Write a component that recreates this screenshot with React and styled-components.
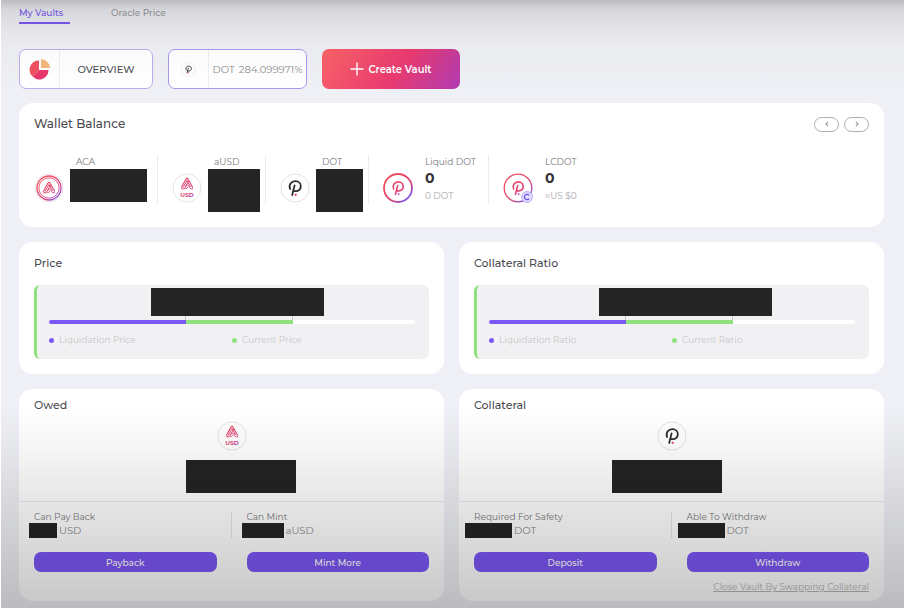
import React from "react";
import styled, { createGlobalStyle } from "styled-components";

const assets = [
  { name: "ACA", icon: "aca", hidden: { width: 77, height: 33 } },
  { name: "aUSD", icon: "ausd", hidden: { width: 52, height: 43 } },
  { name: "DOT", icon: "dot", hidden: { width: 47, height: 43 } },
  { name: "Liquid DOT", icon: "ldot", amount: "0", note: "0 DOT" },
  { name: "LCDOT", icon: "lcdot", amount: "0", note: "≈US $0" }
];

const gauges = [
  { title: "Price", labelStart: 28, liquidation: 37.5, current: 66.7 },
  { title: "Collateral Ratio", labelStart: 30, liquidation: 37.5, current: 66.7 }
];

const positions = [
  {
    title: "Owed",
    icon: "ausd",
    amountStart: 38.5,
    bleed: 5,
    actions: [
      { label: "Can Pay Back", hidden: 28, unit: "USD", button: "Payback" },
      { label: "Can Mint", hidden: 42, unit: "aUSD", button: "Mint More" }
    ]
  },
  {
    title: "Collateral",
    icon: "dot",
    amountStart: 35,
    bleed: 9,
    actions: [
      { label: "Required For Safety", hidden: 47, unit: "DOT", button: "Deposit" },
      { label: "Able To Withdraw", hidden: 47, unit: "DOT", button: "Withdraw" }
    ],
    link: "Close Vault By Swapping Collateral"
  }
];

function BrandGradient({ id }) {
  return (
    <defs>
      <linearGradient
        id={id}
        gradientUnits="userSpaceOnUse"
        x1="-8"
        y1="-8"
        x2="10"
        y2="12"
      >
        <stop offset="0" stopColor="#ee4c5e" />
        <stop offset="0.6" stopColor="#dc4278" />
        <stop offset="1" stopColor="#7458f5" />
      </linearGradient>
    </defs>
  );
}

function AcalaMark({ stroke }) {
  return (
    <g fill="none" stroke={stroke} strokeLinejoin="round" strokeLinecap="round">
      <path strokeWidth="1.1" d="M-5.6 3.2 L-0.7 -5.6 H0.7 L5.6 3.2" />
      <path strokeWidth="1" d="M-5.4 4.8 H-2.8 L1.5 -2.8" />
      <path strokeWidth="1" d="M-3.8 3.2 L0 -3.6 L3.4 2.6" />
      <path
        strokeWidth="1"
        d="M-1.4 2.6 C-0.4 0.2 2.2 0.8 2.2 2.6 C2.2 4.4 4 5 5.6 4.8"
      />
      <path strokeWidth="1" d="M-1.4 4.4 C-0.4 4.8 0.6 4.2 0.8 3.2" />
    </g>
  );
}

function PolkadotMark({ stroke, dot }) {
  return (
    <g>
      <path
        fill="none"
        stroke={stroke}
        strokeWidth="1.8"
        strokeLinecap="round"
        d="M-4.9 1 C-6.6 -3 -3.8 -6.8 0.4 -6.8 C3.6 -6.8 5.8 -4.5 5.8 -1.7 C5.8 1.2 3.6 3.2 0.8 3.2 H-1.4"
      />
      <path
        fill="none"
        stroke={stroke}
        strokeWidth="1.8"
        strokeLinecap="round"
        d="M-0.4 -2.6 L-2.8 7"
      />
      <circle cx="0.7" cy="6.8" r="1.1" fill={dot} />
    </g>
  );
}

function TokenIcon({ type, size = 30 }) {
  const id = `brand-${React.useId()}`;
  const brand = `url(#${id})`;

  return (
    <Token width={size} height={size} viewBox="-15 -15 30 30" aria-hidden="true">
      <BrandGradient id={id} />
      {type === "aca" && (
        <>
          <circle r="14" fill="#fff" stroke="#e6e4ea" />
          <circle r="12" fill="none" stroke={brand} strokeWidth="1.3" />
          <circle r="10.2" fill="none" stroke={brand} strokeWidth="0.9" />
          <AcalaMark stroke={brand} />
        </>
      )}
      {type === "ausd" && (
        <>
          <circle r="14" fill="#fff" stroke="#e4e4e6" />
          <g transform="translate(0 -4)">
            <AcalaMark stroke={brand} />
          </g>
          <TokenText y="9" textAnchor="middle" fill={brand}>
            USD
          </TokenText>
        </>
      )}
      {type === "dot" && (
        <>
          <circle r="14" fill="#fff" stroke="#e2e2e4" />
          <PolkadotMark stroke="#2d2d2f" dot="#e6336f" />
        </>
      )}
      {type === "ldot" && (
        <>
          <circle r="14" fill="#fff" stroke={brand} strokeWidth="1.8" />
          <g transform="scale(0.9)">
            <PolkadotMark stroke={brand} dot="#b24bb0" />
          </g>
        </>
      )}
      {type === "lcdot" && (
        <>
          <circle r="13.8" fill="#fff" stroke={brand} strokeWidth="1.3" />
          <g transform="scale(0.9)">
            <PolkadotMark stroke={brand} dot="#b24bb0" />
          </g>
          <circle cx="9" cy="9" r="5.4" fill="#e5e0ff" stroke="#a795fa" strokeWidth="0.8" />
          <path
            fill="none"
            stroke="#6b50f0"
            strokeWidth="1.3"
            d="M11 7.3 A2.6 2.6 0 1 0 11 10.7"
          />
        </>
      )}
    </Token>
  );
}

function PieIcon() {
  return (
    <svg width="22" height="22" viewBox="0 0 22 22" aria-hidden="true">
      <path fill="#f0525f" d="M10 2.5 V12 L3.6 18.6 A9.3 9.3 0 0 1 10 2.5 Z" />
      <path fill="#e8386c" d="M10 12 H19.5 A9.3 9.3 0 0 1 3.6 18.6 Z" />
      <path fill="#f5b77c" d="M12 1 A9.3 9.3 0 0 1 21 10 H12 Z" />
    </svg>
  );
}

function PlusIcon() {
  return (
    <svg width="14" height="14" viewBox="0 0 14 14" aria-hidden="true">
      <path d="M7 0.5 V13.5 M0.5 7 H13.5" stroke="#fff" strokeWidth="1.4" />
    </svg>
  );
}

function Chevron({ flip }) {
  return (
    <svg width="4" height="6" viewBox="0 0 4 6" aria-hidden="true">
      <path
        d={flip ? "M1 0.8 L3 3 L1 5.2" : "M3 0.8 L1 3 L3 5.2"}
        fill="none"
        stroke="#9a9a9e"
        strokeWidth="1.2"
      />
    </svg>
  );
}

function Gauge({ title, labelStart, liquidation, current }) {
  const unit = title.split(" ").pop();
  const liquidationWidth = { width: `${liquidation}%` };
  const currentWidth = { width: `${current - liquidation}%` };

  return (
    <Card>
      <CardTitle>{title}</CardTitle>
      <GaugePanel>
        <Masked $width={173} $height={28} style={{ marginLeft: `${labelStart}%` }} />
        <Ticks>
          <Tick style={liquidationWidth} />
          <Tick style={currentWidth} />
        </Ticks>
        <Track>
          <TrackFill $color="#7b58f5" style={liquidationWidth} />
          <TrackFill $color="#90e07e" style={currentWidth} />
        </Track>
        <Legend>
          <LegendItem $color="#7b58f5">Liquidation {unit}</LegendItem>
          <LegendItem $color="#90e07e">Current {unit}</LegendItem>
        </Legend>
      </GaugePanel>
    </Card>
  );
}

function Position({ title, icon, amountStart, bleed, actions, link }) {
  return (
    <PositionCard>
      <CardTitle>{title}</CardTitle>
      <PositionIcon>
        <TokenIcon type={icon} />
      </PositionIcon>
      <Masked $width={110} $height={33} style={{ marginLeft: `${amountStart}%` }} />
      <Actions>
        {actions.map(action => (
          <Action key={action.label}>
            <ActionLabel>{action.label}</ActionLabel>
            <ActionValue $bleed={bleed}>
              <Masked $width={action.hidden} $height={15} />
              {action.unit}
            </ActionValue>
            <ActionButton type="button">{action.button}</ActionButton>
          </Action>
        ))}
      </Actions>
      {link && <CloseLink href="#close">{link}</CloseLink>}
    </PositionCard>
  );
}

export default function App() {
  return (
    <>
      <GlobalStyle />
      <Page>
        <Tabs>
          <Tab href="#vaults" $active>
            My Vaults
          </Tab>
          <Tab href="#oracle">Oracle Price</Tab>
        </Tabs>

        <Toolbar>
          <VaultButton type="button">
            <VaultIcon>
              <PieIcon />
            </VaultIcon>
            <VaultName>OVERVIEW</VaultName>
          </VaultButton>
          <VaultButton type="button" $selected>
            <VaultIcon>
              <TokenIcon type="dot" size={15} />
            </VaultIcon>
            <VaultRatio>
              <span>DOT</span>
              <span>284.099971%</span>
            </VaultRatio>
          </VaultButton>
          <CreateButton type="button">
            <PlusIcon />
            Create Vault
          </CreateButton>
        </Toolbar>

        <WalletCard>
          <WalletHeader>
            <CardTitle>Wallet Balance</CardTitle>
            <Pager>
              <PagerButton type="button" aria-label="Previous">
                <Chevron />
              </PagerButton>
              <PagerButton type="button" aria-label="Next">
                <Chevron flip />
              </PagerButton>
            </Pager>
          </WalletHeader>
          <Assets>
            {assets.map(asset => (
              <Asset key={asset.name}>
                <TokenIcon type={asset.icon} />
                <div>
                  <AssetName>{asset.name}</AssetName>
                  {asset.hidden ? (
                    <AssetMask>
                      <Masked $width={asset.hidden.width} $height={asset.hidden.height} />
                    </AssetMask>
                  ) : (
                    <>
                      <AssetAmount>{asset.amount}</AssetAmount>
                      <AssetNote>{asset.note}</AssetNote>
                    </>
                  )}
                </div>
              </Asset>
            ))}
          </Assets>
        </WalletCard>

        <Columns>
          {gauges.map(gauge => (
            <Gauge key={gauge.title} {...gauge} />
          ))}
          {positions.map(position => (
            <Position key={position.title} {...position} />
          ))}
        </Columns>
      </Page>
    </>
  );
}

const GlobalStyle = createGlobalStyle`
  * {
    box-sizing: border-box;
  }

  body {
    margin: 0;
    background: #eff0f5;
    font-family: Montserrat, Inter, sans-serif;
    color: #4b4b4f;
  }

  button {
    font-family: inherit;
    cursor: pointer;
  }
`;

const Page = styled.main`
  position: relative;
  min-height: 100vh;
  padding: 6px 20px 7px 18px;
  border-left: 1px solid #ffffff;

  /* vignette over the whole page */
  &::after {
    content: "";
    position: absolute;
    inset: 0;
    pointer-events: none;
    background: linear-gradient(
        to bottom,
        rgba(0, 0, 0, 0.22) 0,
        rgba(0, 0, 0, 0.1) 10px,
        rgba(0, 0, 0, 0.05) 28px,
        rgba(0, 0, 0, 0.02) 48px,
        rgba(0, 0, 0, 0) 90px
      ),
      linear-gradient(
        to top,
        rgba(0, 0, 0, 0.22) 0,
        rgba(0, 0, 0, 0.17) 45px,
        rgba(0, 0, 0, 0.1) 105px,
        rgba(0, 0, 0, 0.04) 160px,
        rgba(0, 0, 0, 0) 200px
      );
  }
`;

const Tabs = styled.nav`
  display: flex;
  gap: 41px;
`;

const Tab = styled.a`
  min-width: 51px;
  padding-bottom: 2px;
  border-bottom: 2px solid ${props => (props.$active ? "#7b58f5" : "transparent")};
  font-size: 9px;
  font-weight: 500;
  line-height: 14px;
  text-decoration: none;
  color: ${props => (props.$active ? "#7b58f5" : "#9b9b9f")};
`;

const Toolbar = styled.div`
  display: flex;
  gap: 15px;
  margin: 25px 0 14px;
`;

const VaultButton = styled.button`
  display: flex;
  align-items: stretch;
  width: ${props => (props.$selected ? 139 : 134)}px;
  height: 40px;
  padding: 0;
  border: 1px solid ${props => (props.$selected ? "#a898f2" : "#b9aef0")};
  border-radius: 7px;
  background: #ffffff;
`;

const VaultIcon = styled.span`
  display: flex;
  align-items: center;
  justify-content: center;
  flex: 0 0 40px;
  border-right: 1px solid #efeff2;
`;

const VaultName = styled.span`
  flex: 1;
  align-self: center;
  font-size: 10px;
  font-weight: 500;
  color: #4b4b4f;
`;

const VaultRatio = styled.span`
  display: flex;
  flex: 1;
  align-items: center;
  justify-content: center;
  gap: 4px;
  font-size: 10px;
  color: #8c8c90;
`;

const CreateButton = styled.button`
  display: flex;
  align-items: center;
  justify-content: center;
  gap: 4px;
  width: 138px;
  height: 40px;
  border: 0;
  border-radius: 7px;
  background: linear-gradient(125deg, #fa6468 0%, #ea3a70 55%, #b03cb4 100%);
  color: #ffffff;
  font-size: 10px;
  font-weight: 600;
`;

const Card = styled.section`
  padding: 12px 15px 15px;
  border-radius: 14px;
  background: #ffffff;
`;

const CardTitle = styled.h2`
  margin: 0;
  font-size: 11px;
  font-weight: 500;
  line-height: 18px;
`;

const WalletCard = styled(Card)`
  padding-bottom: 23px;

  ${CardTitle} {
    font-size: 12px;
  }
`;

const WalletHeader = styled.header`
  display: flex;
  align-items: center;
  justify-content: space-between;
`;

const Pager = styled.div`
  display: flex;
  gap: 5px;
`;

const PagerButton = styled.button`
  display: flex;
  align-items: center;
  justify-content: center;
  width: 25px;
  height: 15px;
  padding: 0;
  border: 1px solid #adadb0;
  border-radius: 8px;
  background: #ffffff;
`;

const Token = styled.svg`
  flex: none;
  display: block;
`;

const TokenText = styled.text`
  font-size: 6px;
  font-weight: 700;
`;

const Assets = styled.div`
  display: grid;
  grid-template-columns: 123px 108px 103px 120px 1fr;
  margin-top: 22px;
`;

const Asset = styled.div`
  display: flex;
  gap: 12px;
  height: 49px;

  & + & {
    padding-left: 14px;
    border-left: 1px solid #ededf0;
  }

  ${Token} {
    margin-top: 18px;
  }
`;

const AssetName = styled.div`
  font-size: 9px;
  line-height: 14px;
  color: #78787c;
`;

const AssetAmount = styled.div`
  font-size: 14px;
  font-weight: 700;
  line-height: 19px;
  color: #333336;
`;

const AssetNote = styled.div`
  font-size: 9px;
  line-height: 16px;
  color: #a8a8ac;
`;

const Masked = styled.div`
  flex: none;
  width: ${props => props.$width}px;
  height: ${props => props.$height}px;
  background: #242424;
`;

const AssetMask = styled.div`
  margin-left: -6px;
`;

const Columns = styled.div`
  display: grid;
  grid-template-columns: 1fr 1fr;
  gap: 15px;
  margin-top: 15px;
`;

const GaugePanel = styled.div`
  margin-top: 13px;
  padding: 3px 14px 12px 12px;
  border-left: 3px solid #90e07e;
  border-radius: 6px;
  background: #f1f1f3;
`;

const Ticks = styled.div`
  display: flex;
  height: 4px;
`;

const Tick = styled.div`
  border-right: 1px solid #c4c4ca;
`;

const Track = styled.div`
  display: flex;
  height: 4px;
  border-radius: 2px;
  overflow: hidden;
  background: #ffffff;
`;

const TrackFill = styled.div`
  background: ${props => props.$color};
`;

const Legend = styled.div`
  display: grid;
  grid-template-columns: 1fr 1fr;
  margin-top: 9px;
`;

const LegendItem = styled.div`
  display: flex;
  align-items: center;
  gap: 5px;
  font-size: 9px;
  line-height: 14px;
  color: #c6c6ca;

  &::before {
    content: "";
    width: 5px;
    height: 5px;
    border-radius: 50%;
    background: ${props => props.$color};
  }
`;

const PositionCard = styled(Card)`
  padding-top: 7px;
  padding-bottom: 7px;
  min-height: 212px;
`;

const PositionIcon = styled.div`
  display: flex;
  justify-content: center;
  margin: 7px 0 9px;
`;

const Actions = styled.div`
  display: grid;
  grid-template-columns: 1fr 1fr;
  gap: 30px;
  margin: 8px -15px 0;
  padding: 8px 15px 0;
  border-top: 1px solid #e8e8ea;
`;

const Action = styled.div`
  position: relative;

  & + &::before {
    content: "";
    position: absolute;
    top: 2px;
    left: -16px;
    height: 26px;
    border-left: 1px solid #e4e4e6;
  }
`;

const ActionLabel = styled.div`
  font-size: 9px;
  line-height: 13px;
  color: #7c7c80;
`;

const ActionValue = styled.div`
  display: flex;
  align-items: center;
  gap: 2px;
  margin-left: -${props => props.$bleed}px;
  font-size: 10px;
  line-height: 15px;
  color: #8a8a8e;
`;

const ActionButton = styled.button`
  display: block;
  width: 100%;
  height: 20px;
  margin-top: 14px;
  padding: 0;
  border: 0;
  border-radius: 7px;
  background: #7b56f5;
  color: #ffffff;
  font-size: 9px;
  font-weight: 500;
`;

const CloseLink = styled.a`
  display: block;
  margin-top: 8px;
  font-size: 9px;
  line-height: 14px;
  text-align: right;
  color: #b4b4b8;
`;
